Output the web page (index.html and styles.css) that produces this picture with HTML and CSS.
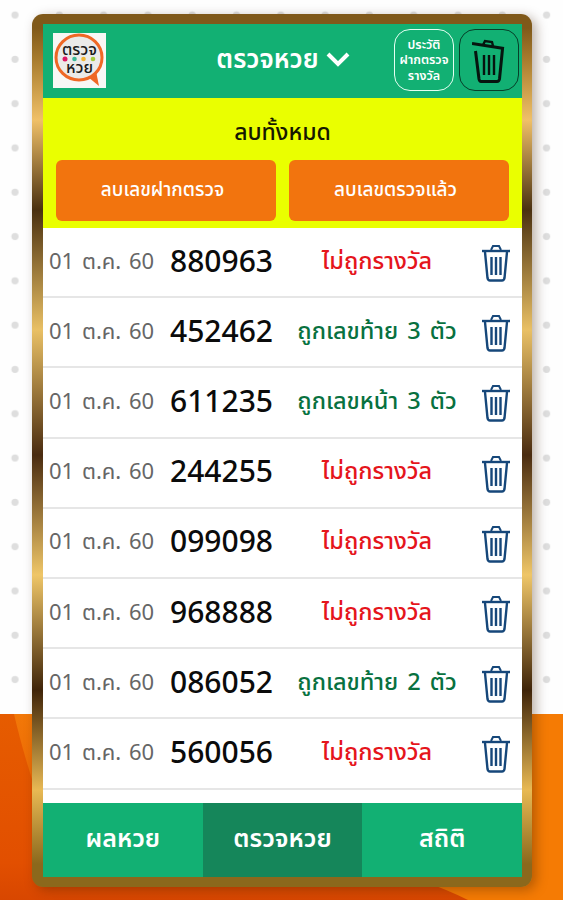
FILE: index.html
```html
<!DOCTYPE html>
<html lang="th">
<head>
  <meta charset="UTF-8" />
  <meta name="viewport" content="width=device-width, initial-scale=1.0"/>
  <title>ตรวจหวย</title>
  <link rel="stylesheet" href="styles.css">
</head>
<body>
  <svg class="backdrop" viewBox="0 0 563 900">
    <defs>
      <pattern id="dots" x="-7" y="-7" width="44.3" height="44.3" patternUnits="userSpaceOnUse">
        <circle cx="22" cy="22" r="3.6" fill="#dedede"/>
      </pattern>
      <linearGradient id="orange" x1="0" y1="0" x2="0" y2="1">
        <stop offset="0" stop-color="#e65c00"/>
        <stop offset="0.8" stop-color="#e24f00"/>
        <stop offset="1" stop-color="#d84700"/>
      </linearGradient>
      <linearGradient id="flame" x1="0" y1="0" x2="0" y2="1">
        <stop offset="0" stop-color="#f27808"/>
        <stop offset="1" stop-color="#e65a02"/>
      </linearGradient>
    </defs>
    <rect width="563" height="714" fill="#fefefe"/>
    <rect width="563" height="692" fill="url(#dots)"/>
    <rect y="714" width="563" height="186" fill="url(#orange)"/>
    <path d="M14 714H60V860Q28 775 14 714Z" fill="url(#flame)"/>
    <path d="M563 714H500V880H420Q448 890 468 900H563Z" fill="#f57b04"/>
  </svg>

  <div class="frame">
    <div class="screen">
      <header class="header">
        <svg class="logo" viewBox="0 0 53 55">
          <rect width="53" height="55" fill="#f7f7f5"/>
          <path d="M35 44L46 53L43 38Z" fill="#ef6825"/>
          <ellipse cx="26" cy="24.500" rx="23" ry="22.500" fill="#ebeae9" stroke="#ef6825" stroke-width="3"/>
          <text x="9" y="21.500" textLength="35" lengthAdjust="spacingAndGlyphs" class="logo-text">ตรวจ</text>
          <text x="13" y="40" textLength="27" lengthAdjust="spacingAndGlyphs" class="logo-text">หวย</text>
          <circle cx="12" cy="26" r="2.500" fill="#dd1762"/>
          <circle cx="21.500" cy="26" r="2.300" fill="#3bb997"/>
          <circle cx="30.500" cy="26" r="2.300" fill="#f2b632"/>
          <circle cx="40" cy="26" r="2.300" fill="#a3cb3a"/>
        </svg>
        <div class="title">
          <span>ตรวจหวย</span>
          <svg width="24" height="16" viewBox="0 0 24 16"><path d="M2 2L12 12L22 2" fill="none" stroke="#fff" stroke-width="4"/></svg>
        </div>
        <button class="square history">ประวัติ<br>ฝากตรวจ<br>รางวัล</button>
        <button class="square trash-all">
          <svg width="34" height="46" viewBox="0 0 34 46" fill="none" stroke="#06150f">
            <path d="M0 6.500L32 11.500" stroke-width="3"/>
            <path d="M11 8L13 4L20 5L21 9" stroke-width="2.400"/>
            <path d="M3.500 14L7 42Q7.500 44.500 9 44.500H25Q27 44.500 27.500 42L30.500 12" stroke-width="3"/>
            <path d="M12 18V38M17 18V38M22 18V38" stroke-width="2.400"/>
          </svg>
        </button>
      </header>

      <section class="clear">
        <h2>ลบทั้งหมด</h2>
        <div class="clear-buttons">
          <button>ลบเลขฝากตรวจ</button>
          <button>ลบเลขตรวจแล้ว</button>
        </div>
      </section>

      <ul class="tickets" id="tickets"></ul>

      <nav class="tabs">
        <a>ผลหวย</a>
        <a class="active">ตรวจหวย</a>
        <a>สถิติ</a>
      </nav>
    </div>
  </div>

  <script>
    const tickets = [
      ['880963', 'ไม่ถูกรางวัล', 'lose'],
      ['452462', 'ถูกเลขท้าย 3 ตัว', 'win'],
      ['611235', 'ถูกเลขหน้า 3 ตัว', 'win'],
      ['244255', 'ไม่ถูกรางวัล', 'lose'],
      ['099098', 'ไม่ถูกรางวัล', 'lose'],
      ['968888', 'ไม่ถูกรางวัล', 'lose'],
      ['086052', 'ถูกเลขท้าย 2 ตัว', 'win'],
      ['560056', 'ไม่ถูกรางวัล', 'lose']
    ];

    const trash = `
      <svg class="trash" viewBox="0 0 30 38" fill="none" stroke="#16477a">
        <path d="M1 7H29" stroke-width="2.400"/>
        <path d="M10 6L12 2H18L20 6" stroke-width="2"/>
        <path d="M4 8L6.500 34Q7 36.500 9 36.500H21Q23 36.500 23.500 34L26 8" stroke-width="2.400"/>
        <path d="M10.500 13V31M15 13V31M19.500 13V31" stroke-width="2.400"/>
      </svg>`;

    document.getElementById('tickets').innerHTML = tickets.map(([number, result, type]) => `
      <li>
        <span class="date">01 ต.ค. 60</span>
        <span class="number">${number}</span>
        <span class="result ${type}">${result}</span>
        ${trash}
      </li>`).join('');
  </script>
</body>
</html>
```
FILE: styles.css
```css
:root {
  --green: #12b073;
  --green-dark: #15865a;
  --yellow: #eaff00;
  --orange: #f2740e;
  --line: #e6e6e6;
}

* {
  box-sizing: border-box;
}

body {
  margin: 0;
  height: 900px;
  padding: 14px 31px 13px 32px;
  overflow: hidden;
  font-family: 'Noto Sans', 'Noto Sans Thai', sans-serif;
}

.backdrop {
  position: absolute;
  top: 0;
  left: 0;
  width: 563px;
  height: 900px;
  z-index: -1;
}

.frame {
  height: 873px;
  padding: 10px 10px 10px 11px;
  border-radius: 11px;
  background: linear-gradient(#80591a 0, #80591a 14px, #a77b2d 45px, #f0c068 106px, #4a3010 196px, #e9c065 316px, #4a2c10 441px, #efc668 561px, #3f2409 676px, #e8b954 776px, #8b681c 850px, #8b681c 100%);
  box-shadow: 4px 3px 12px rgba(60, 30, 0, 0.35);
}

.screen {
  height: 853px;
  display: flex;
  flex-direction: column;
  background: #fff;
}

button {
  font-family: inherit;
  white-space: nowrap;
  padding: 0;
}

.header {
  height: 74px;
  display: grid;
  grid-template-columns: 53px 1fr 60px 60px;
  align-items: start;
  padding: 5px 3px 0 10px;
  column-gap: 5px;
  background: var(--green);
}

.logo {
  width: 53px;
  height: 55px;
  margin-top: 4px;
}

.logo-text {
  font-size: 15px;
  font-weight: 500;
  fill: #1b1b1b;
}

.title {
  display: flex;
  align-items: center;
  justify-content: center;
  gap: 7px;
  height: 62px;
  padding-left: 66px;
  color: #fff;
  font-size: 26px;
  font-weight: 600;
}

.square {
  height: 62px;
  border: 1.5px solid #e4fff2;
  border-radius: 16px;
  background: none;
  color: #fff;
}

.history {
  font-size: 12.5px;
  font-weight: 600;
  line-height: 15.5px;
}

.trash-all {
  display: flex;
  align-items: center;
  justify-content: center;
  border-color: #073f29;
}

.clear {
  height: 130px;
  padding: 14px 13px 0;
  background: var(--yellow);
}

.clear h2 {
  margin: 0;
  height: 48px;
  line-height: 39px;
  text-align: center;
  font-size: 23px;
  font-weight: 500;
  color: #161800;
}

.clear-buttons {
  display: grid;
  grid-template-columns: 1fr 1fr;
  gap: 13px;
}

.clear-buttons button {
  height: 61px;
  padding-right: 7px;
  border: none;
  border-radius: 6px;
  background: var(--orange);
  color: #fff;
  font-size: 19px;
  font-weight: 500;
}

.tickets {
  flex: 1;
  margin: 0;
  padding: 0;
  list-style: none;
}

.tickets li {
  height: 70.2px;
  display: grid;
  grid-template-columns: 121px 117px 180px 30px;
  align-items: center;
  padding: 1px 6px 2px;
  border-bottom: 2px solid var(--line);
  white-space: nowrap;
}

.date {
  font-size: 22px;
  word-spacing: 2px;
  color: #666;
}

.number {
  font-size: 30px;
  font-weight: 500;
  line-height: 36px;
  padding-bottom: 2px;
  color: #0b0b0b;
}

.result {
  font-size: 23.5px;
  font-weight: 500;
  text-align: center;
}

.lose {
  color: #e5151c;
}

.win {
  word-spacing: 3px;
  color: #08713f;
}

.trash {
  width: 30px;
  height: 38px;
  margin: 3px 0 0 14px;
}

.tabs {
  height: 74px;
  display: grid;
  grid-template-columns: repeat(3, 1fr);
}

.tabs a {
  display: flex;
  align-items: center;
  justify-content: center;
  padding-bottom: 2px;
  background: var(--green);
  color: #fff;
  font-size: 25px;
  font-weight: 600;
}

.tabs .active {
  background: var(--green-dark);
}
```
